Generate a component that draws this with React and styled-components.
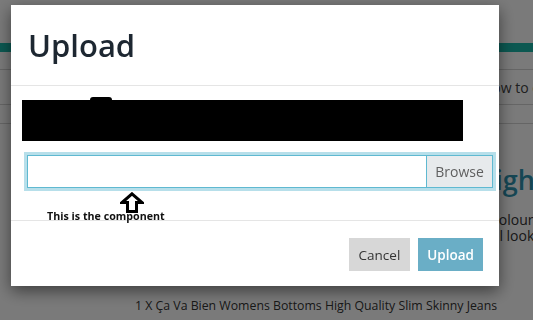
import React from 'react';
import styled, { createGlobalStyle } from 'styled-components';

const Global = createGlobalStyle`
  html, body {
    margin: 0;
    padding: 0;
    background: #fff;
    font-family: "Open Sans", "Liberation Sans", sans-serif;
    overflow: hidden;
  }
`;

// page behind the dialog
const Page = styled.div`
  width: 533px;
  height: 320px;
  overflow: hidden;
  background: #fff;
  color: #333;
`;

const TopBar = styled.div`
  height: 43px;
`;

const TealBar = styled.div`
  height: 9px;
  background: #1ab8aa;
`;

const NavRow = styled.div`
  height: ${({ h }) => h}px;
  border-bottom: 1px solid #d4d4d4;
  display: flex;
  align-items: center;
  padding-left: ${({ pad }) => pad || 0}px;
  font-size: 14px;
  color: #444;
  white-space: nowrap;
  overflow: hidden;
`;

const Main = styled.div`
  display: grid;
  grid-template-columns: 475px 58px;
  padding-top: 36px;
`;

const Info = styled.div`
  grid-column: 2;
  white-space: nowrap;
  overflow: hidden;
`;

const Heading = styled.h2`
  margin: 0 0 12px;
  font-size: 27px;
  font-weight: 600;
  line-height: 40px;
  color: #2f93b0;
`;

const Para = styled.p`
  margin: 0;
  font-size: 14px;
  line-height: 16px;
  color: #333;
  padding-left: ${({ pad }) => pad || 0}px;
`;

const Summary = styled.div`
  grid-column: 1 / span 2;
  padding: 53px 0 0 135px;
  font-size: 12.3px;
  color: #333;
  white-space: nowrap;
`;

// dialog
const Backdrop = styled.div`
  position: fixed;
  inset: 0;
  background: rgba(0, 0, 0, 0.52);
`;

const Dialog = styled.div`
  position: absolute;
  left: 11px;
  top: 5px;
  width: 488px;
  height: 281px;
  background: #fff;
  box-shadow: 0 5px 15px rgba(0, 0, 0, 0.5);
  display: flex;
  flex-direction: column;
`;

const Header = styled.div`
  height: 80px;
  border-bottom: 1px solid #e5e5e5;
  padding: 0 17px;
  display: flex;
  align-items: center;
`;

const Title = styled.h1`
  margin: 0;
  font-size: 31px;
  font-weight: 600;
  color: #1d2731;
  line-height: 1;
`;

const Body = styled.div`
  height: 135px;
  padding: 14px 5px 0 11px;
  box-sizing: border-box;
  border-bottom: 1px solid #e5e5e5;
`;

const Redacted = styled.div`
  position: relative;
  width: 441px;
  height: 41px;
  background: #000;
  &::before {
    content: '';
    position: absolute;
    left: 68px;
    top: -3px;
    width: 22px;
    height: 3px;
    border-radius: 3px 3px 0 0;
    background: #000;
  }
`;

const InputGroup = styled.div`
  display: flex;
  box-sizing: border-box;
  height: 33px;
  width: 466px;
  margin: 14px 0 0 5px;
  border: 1px solid #5fb9d1;
  box-shadow: 0 0 0 3px #b7dfea;
`;

const FileField = styled.div`
  flex: 1;
  background: #fff;
`;

const Browse = styled.div`
  width: 65px;
  border-left: 1px solid #5fb9d1;
  background: #e7eaec;
  color: #5f5f5f;
  font-size: 14px;
  display: flex;
  align-items: center;
  justify-content: center;
`;

const Note = styled.div`
  display: flex;
  flex-direction: column;
  padding-left: 25px;
  margin-top: 4px;
`;

const Arrow = styled.svg`
  margin-left: 73px;
  display: block;
`;

const NoteText = styled.div`
  font-size: 10.7px;
  font-weight: 700;
  color: #111;
  line-height: 13px;
  margin-top: -3px;
`;

const Footer = styled.div`
  flex: 1;
  display: flex;
  justify-content: flex-end;
  align-items: flex-start;
  gap: 8px;
  padding: 17px 16px 0;
`;

const Button = styled.div`
  height: 33px;
  padding: 0 ${({ primary }) => (primary ? 9 : 10)}px;
  display: flex;
  align-items: center;
  font-size: 13.5px;
  font-weight: ${({ primary }) => (primary ? 600 : 400)};
  background: ${({ primary }) => (primary ? '#6aaec6' : '#d7d7d7')};
  color: ${({ primary }) => (primary ? '#fff' : '#333')};
`;

export default function App() {
  return (
    <>
      <Global />
      <Page>
        <TopBar />
        <TealBar />
        <NavRow h={17} />
        <NavRow h={34} pad={482}>How to order</NavRow>
        <NavRow h={18} />
        <Main>
          <Info>
            <Heading>High Waist</Heading>
            <Para pad={15}>Colour: Indigo</Para>
            <Para pad={12}>All looks</Para>
          </Info>
          <Summary>1 X Ça Va Bien Womens Bottoms High Quality Slim Skinny Jeans</Summary>
        </Main>
      </Page>
      <Backdrop>
        <Dialog>
          <Header>
            <Title>Upload</Title>
          </Header>
          <Body>
            <Redacted />
            <InputGroup>
              <FileField />
              <Browse>Browse</Browse>
            </InputGroup>
            <Note>
              <Arrow width="24" height="21" viewBox="0 0 24 21">
                <path d="M12 1.8 L22 10.5 L16.5 10.5 L16.5 19.5 L7.5 19.5 L7.5 10.5 L2 10.5 Z"
                  fill="#fff" stroke="#000" strokeWidth="3" strokeLinejoin="miter" />
              </Arrow>
              <NoteText>This is the component</NoteText>
            </Note>
          </Body>
          <Footer>
            <Button>Cancel</Button>
            <Button primary>Upload</Button>
          </Footer>
        </Dialog>
      </Backdrop>
    </>
  );
}
